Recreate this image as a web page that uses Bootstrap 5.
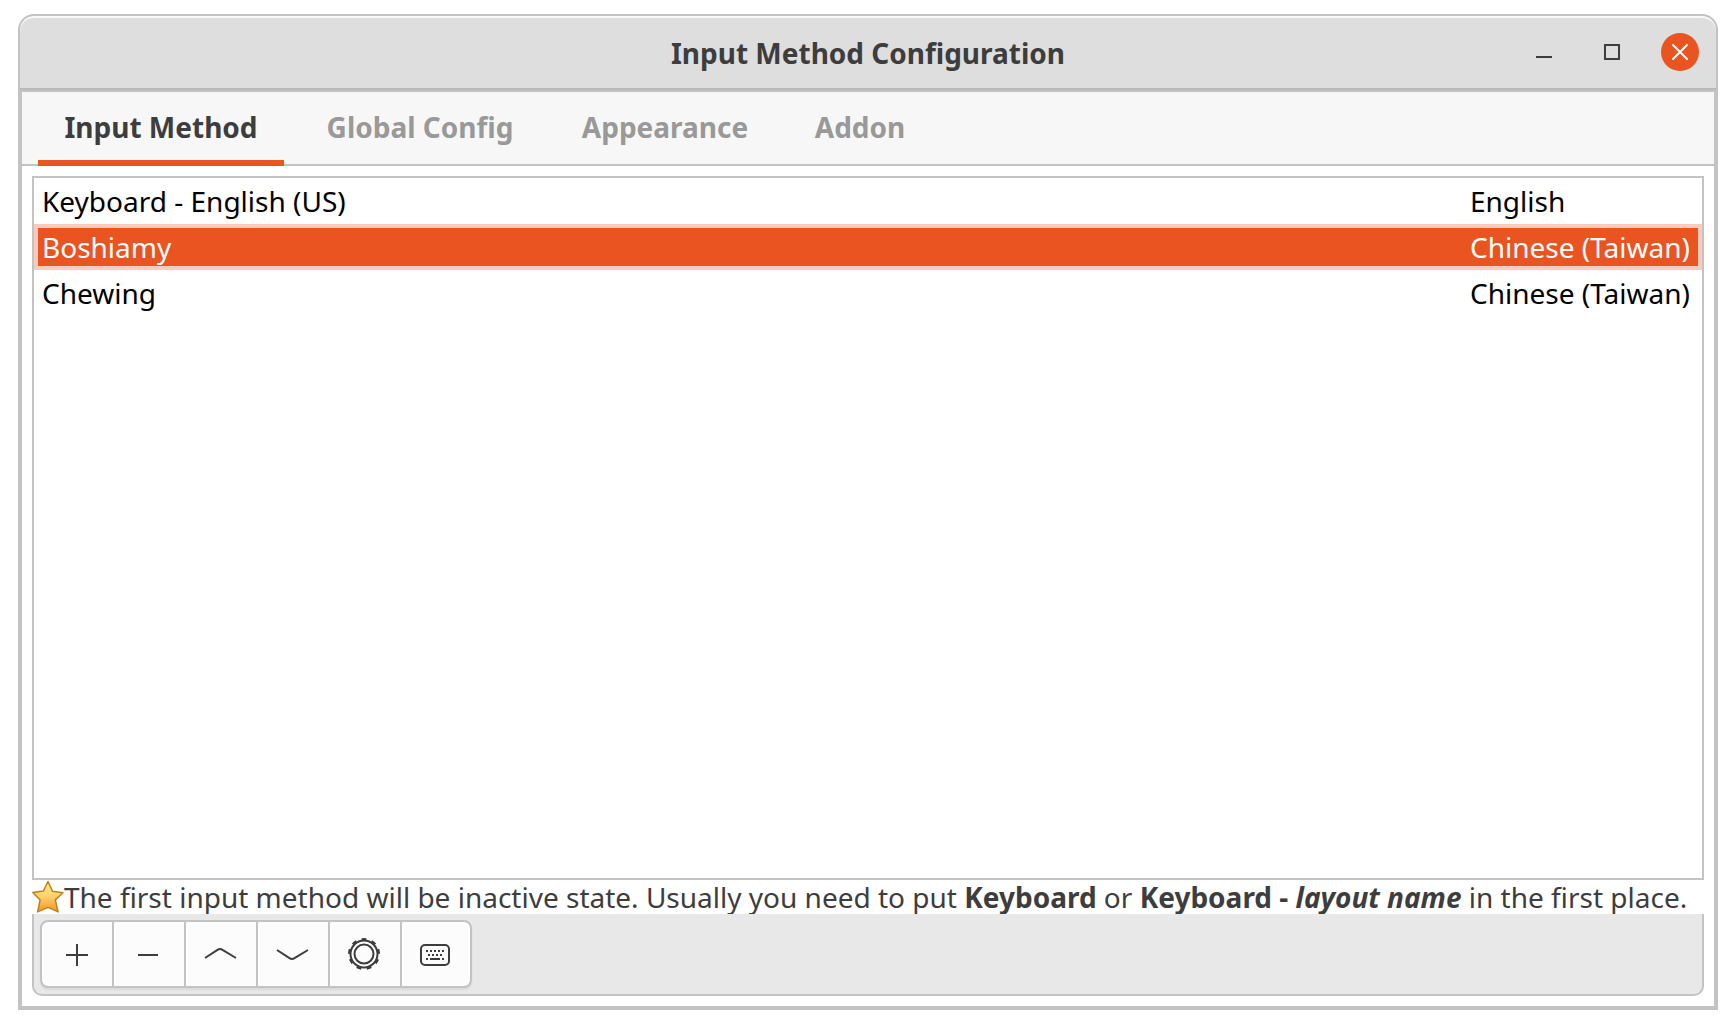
<!DOCTYPE html>
<html lang="en">
<head>
<meta charset="utf-8">
<meta name="viewport" content="width=device-width, initial-scale=1">
<title>Input Method Configuration</title>
<link rel="stylesheet" href="https://cdn.jsdelivr.net/npm/bootstrap@5.3.0/dist/css/bootstrap.min.css">
<style>
  :root { --edge: #c3c3c3; --ink: #3d3d3d; --accent: #e95420; }
  body { font-family: "Noto Sans", sans-serif; font-size: 28px; line-height: 34px; color: var(--ink); background: #fff; }
  .desk { padding: 14px 18px 18px; }
  .titlebar { height: 78px; background: #dedede; border: 2px solid var(--edge); border-bottom: 0; border-radius: 16px 16px 0 0;
    box-shadow: inset 0 2px #f9f9f9, inset 0 -2px var(--edge), inset 0 -4px #b8b8b8; display: grid; grid-template-columns: 1fr auto 1fr; align-items: center; padding: 0 17px 2px; }
  .titlebar h1 { font-size: 28px; line-height: 34px; font-weight: 700; }
  .controls { gap: 30px; padding-bottom: 2px; }
  .wm { width: 38px; height: 38px; padding: 0; border: 0; background: none; color: var(--ink); display: block; }
  .wm-close { background: var(--accent); color: #fff; border-radius: 50%; }
  .wm svg, .tool svg { display: block; margin: auto; fill: none; stroke: currentColor; stroke-width: 2; }
  .frame { border: 4px solid var(--edge); border-top: 0; }
  .tabbar { background: #f7f7f7; border-bottom: 2px solid var(--edge); padding: 0 16px; gap: 16px; }
  .tabbar .nav-item { margin-bottom: -2px; }
  .tabbar .nav-link { height: 74px; padding: 4px 0 2px; font-weight: 700; color: #999; border: 0; border-bottom: 6px solid transparent; border-radius: 0; background: none; }
  .tabbar .nav-link.active { color: var(--ink); background: none; border-color: var(--accent); }
  .w-a { width: 246px } .w-b { width: 240px } .w-c { width: 218px } .w-d { width: 140px }
  .pane { padding: 10px; }
  .methods { border: 2px solid var(--edge); color: #000; }
  .methods td { height: 46px; padding: 0 8px; }
  .methods td:last-child { width: 240px; white-space: nowrap; }
  .methods .chosen { background: var(--accent); color: #fff; outline: 4px solid #f8cbbc; outline-offset: -4px; }
  .hint { height: 34px; white-space: nowrap; }
  .toolbox { background: #e8e8e8; border: 2px solid var(--edge); border-top: 0; border-radius: 0 0 10px 10px; padding: 6px; }
  .tools { border: 2px solid var(--edge); border-radius: 8px; background: #fcfcfc; box-shadow: 0 2px 2px #0001; overflow: hidden; }
  .tool { width: 72px; height: 64px; padding: 0; border: 0; border-right: 2px solid var(--edge); border-radius: 0; color: var(--ink); }
  .tool:last-child { border-right: 0; width: 68px; }
</style>
</head>
<body>
<div class="desk d-flex flex-column min-vh-100">
  <header class="titlebar">
    <span></span>
    <h1 class="m-0">Input Method Configuration</h1>
    <div class="controls d-flex justify-content-end">
      <button class="wm" type="button" aria-label="Minimize"><svg width="38" height="38"><path d="M11 24h16"/></svg></button>
      <button class="wm" type="button" aria-label="Maximize"><svg width="38" height="38"><path d="M12 12h14v14h-14z"/></svg></button>
      <button class="wm wm-close" type="button" aria-label="Close"><svg width="38" height="38"><path d="M12 12l14 14M26 12l-14 14" stroke-linecap="round"/></svg></button>
    </div>
  </header>
  <main class="frame flex-grow-1 d-flex flex-column">
    <ul class="nav tabbar" role="tablist">
      <li class="nav-item" role="presentation"><button class="nav-link active w-a" type="button" role="tab" aria-selected="true">Input Method</button></li>
      <li class="nav-item" role="presentation"><button class="nav-link w-b" type="button" role="tab" aria-selected="false">Global Config</button></li>
      <li class="nav-item" role="presentation"><button class="nav-link w-c" type="button" role="tab" aria-selected="false">Appearance</button></li>
      <li class="nav-item" role="presentation"><button class="nav-link w-d" type="button" role="tab" aria-selected="false">Addon</button></li>
    </ul>
    <section class="pane flex-grow-1 d-flex flex-column">
      <div class="methods flex-grow-1">
        <table class="w-100">
          <tbody>
            <tr><td>Keyboard - English (US)</td><td>English</td></tr>
            <tr class="chosen"><td>Boshiamy</td><td>Chinese (Taiwan)</td></tr>
            <tr><td>Chewing</td><td>Chinese (Taiwan)</td></tr>
          </tbody>
        </table>
      </div>
      <div class="hint d-flex align-items-center">
        <svg class="flex-shrink-0" width="32" height="34" viewBox="0 0 32 34"><defs><linearGradient id="gold" x1="0" y1="0" x2="0" y2="1"><stop offset="0" stop-color="#fff08a"/><stop offset=".5" stop-color="#fdd06f"/><stop offset="1" stop-color="#f8931f"/></linearGradient></defs><path d="M16 1.500l4.500 9.800 10.500 1.400-7.700 7.200 2.800 12-10-4.500-10.500 4.500 2.500-11.800-7.300-7.500 10.600-1.500z" fill="url(#gold)" stroke="#b9821a" stroke-width="1.500" stroke-linejoin="round"/></svg>
        <span>The first input method will be inactive state. Usually you need to put <b>Keyboard</b> or <b>Keyboard - <i>layout name</i></b> in the first place.</span>
      </div>
      <div class="toolbox d-flex">
        <div class="tools d-flex" role="toolbar" aria-label="Input methods">
          <button class="btn tool" type="button" aria-label="Add"><svg width="36" height="36"><path d="M7 19h22M18 8v22"/></svg></button>
          <button class="btn tool" type="button" aria-label="Remove"><svg width="36" height="36"><path d="M7 19h20"/></svg></button>
          <button class="btn tool" type="button" aria-label="Move up"><svg width="36" height="36"><path d="M2 22L14.500 13.800Q17 12.200 19.500 13.800L33 22"/></svg></button>
          <button class="btn tool" type="button" aria-label="Move down"><svg width="36" height="36"><path d="M2 14L14.500 22.200Q17 23.800 19.500 22.200L33 14"/></svg></button>
          <button class="btn tool" type="button" aria-label="Configure"><svg width="36" height="36"><circle cx="17" cy="18" r="9.500"/><circle cx="17" cy="18" r="13.500"/><circle cx="17" cy="18" r="14.500" stroke-width="3" pathLength="90" stroke-dasharray="4.600 5.400" transform="rotate(-99.200 17 18)"/></svg></button>
          <button class="btn tool" type="button" aria-label="Keyboard layout"><svg width="36" height="36"><rect x="3" y="9" width="28" height="20" rx="4"/><path d="M8 15h2m2 0h2m2 0h2m2 0h2m2 0h2M10 19h2m2 0h2m2 0h2m2 0h2M8 23h2m2 0h10m2 0h2"/></svg></button>
        </div>
      </div>
    </section>
  </main>
</div>
<script src="https://cdn.jsdelivr.net/npm/bootstrap@5.3.0/dist/js/bootstrap.bundle.min.js"></script>
</body>
</html>
